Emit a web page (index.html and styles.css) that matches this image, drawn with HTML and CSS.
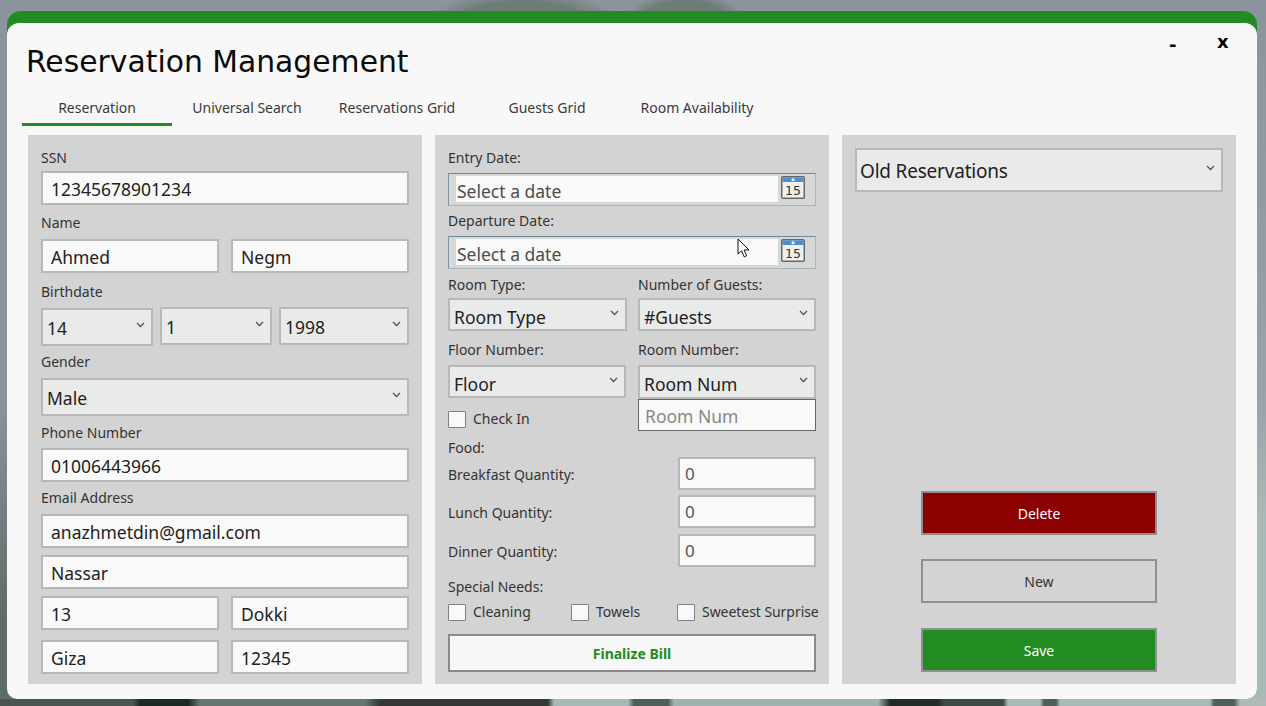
FILE: index.html
```html
<!DOCTYPE html>
<html lang="en">
    <head>
        <meta charset="UTF-8" />
        <meta name="viewport" content="width=device-width, initial-scale=1.0" />
        <title>Reservation Management</title>
        <link rel="stylesheet" href="styles.css">
    </head>
    <body>
        <svg width="0" height="0" class="defs">
            <symbol id="chevron" viewBox="0 0 9 6">
                <path d="M1 1l3.5 3.5L8 1" fill="none" stroke="#555" stroke-width="1.3" />
            </symbol>
        </svg>
        <div class="window">
            <div class="title-row">
                <h1>Reservation Management</h1>
                <div class="win-min">-</div>
                <div class="win-close">x</div>
            </div>
            <div class="tabs">
                <div class="tab active">Reservation</div>
                <div class="tab">Universal Search</div>
                <div class="tab">Reservations Grid</div>
                <div class="tab">Guests Grid</div>
                <div class="tab">Room Availability</div>
            </div>
            <div class="panels">
                <!-- guest details -->
                <div class="panel">
                    <div class="label">SSN</div>
                    <div class="input mt3">12345678901234</div>
                    <div class="label mt8">Name</div>
                    <div class="row two mt6">
                        <div class="input">Ahmed</div>
                        <div class="input">Negm</div>
                    </div>
                    <div class="label mt9">Birthdate</div>
                    <div class="row birth mt5">
                        <div class="select tall nudge">14<svg class="chev"><use href="#chevron" /></svg></div>
                        <div class="select tall">1<svg class="chev"><use href="#chevron" /></svg></div>
                        <div class="select tall">1998<svg class="chev"><use href="#chevron" /></svg></div>
                    </div>
                    <div class="label mt7">Gender</div>
                    <div class="select tall mt6">Male<svg class="chev"><use href="#chevron" /></svg></div>
                    <div class="label mt7">Phone Number</div>
                    <div class="input mt5">01006443966</div>
                    <div class="label mt6">Email Address</div>
                    <div class="input mt6">anazhmetdin@gmail.com</div>
                    <div class="input mt7">Nassar</div>
                    <div class="row two mt7">
                        <div class="input">13</div>
                        <div class="input">Dokki</div>
                    </div>
                    <div class="row two mt10">
                        <div class="input">Giza</div>
                        <div class="input">12345</div>
                    </div>
                </div>

                <!-- booking details -->
                <div class="panel">
                    <div class="label">Entry Date:</div>
                    <div class="date mt5">
                        <div class="date-text">Select a date</div>
                        <svg class="cal" viewBox="0 0 24 23">
                            <rect x="0.75" y="0.75" width="22.5" height="21.5" rx="1" fill="#f0f0f0" stroke="#666" stroke-width="1.5" />
                            <rect x="1.5" y="1.5" width="21" height="4.5" fill="#4a8fd0" />
                            <circle cx="12" cy="3.7" r="1.5" fill="#fff" />
                            <text x="12" y="18.5" text-anchor="middle" class="cal-num">15</text>
                        </svg>
                    </div>
                    <div class="label mt5">Departure Date:</div>
                    <div class="date mt5">
                        <div class="date-text">Select a date</div>
                        <svg class="cal" viewBox="0 0 24 23">
                            <rect x="0.75" y="0.75" width="22.5" height="21.5" rx="1" fill="#f0f0f0" stroke="#666" stroke-width="1.5" />
                            <rect x="1.5" y="1.5" width="21" height="4.5" fill="#4a8fd0" />
                            <circle cx="12" cy="3.7" r="1.5" fill="#fff" />
                            <text x="12" y="18.5" text-anchor="middle" class="cal-num">15</text>
                        </svg>
                    </div>
                    <svg class="cursor" width="14" height="21" viewBox="0 0 14 21">
                        <path d="M1 1v15l3.6-3.2 2.6 6 2.4-1-2.6-5.8H12z" fill="#fff" stroke="#111" stroke-width="1" />
                    </svg>
                    <div class="row two-b mt6">
                        <div class="label">Room Type:</div>
                        <div class="label">Number of Guests:</div>
                    </div>
                    <div class="row two-b mt3">
                        <div class="select">Room Type<svg class="chev"><use href="#chevron" /></svg></div>
                        <div class="select">#Guests<svg class="chev"><use href="#chevron" /></svg></div>
                    </div>
                    <div class="row two-b mt8 floor-labels">
                        <div class="label">Floor Number:</div>
                        <div class="label">Room Number:</div>
                    </div>
                    <div class="row two-b mt5">
                        <div class="select floor">Floor<svg class="chev"><use href="#chevron" /></svg></div>
                        <div class="select room-num">Room Num<svg class="chev"><use href="#chevron" /></svg></div>
                    </div>
                    <div class="row two-b">
                        <label class="check check-in"><span class="box"></span>Check In</label>
                        <div class="room-input">Room Num</div>
                    </div>
                    <div class="label food">Food:</div>
                    <div class="qty first">
                        <div class="label">Breakfast Quantity:</div>
                        <div class="input small">0</div>
                    </div>
                    <div class="qty mt5">
                        <div class="label">Lunch Quantity:</div>
                        <div class="input small">0</div>
                    </div>
                    <div class="qty mt6">
                        <div class="label">Dinner Quantity:</div>
                        <div class="input small">0</div>
                    </div>
                    <div class="label mt10">Special Needs:</div>
                    <div class="needs mt5">
                        <label class="check"><span class="box"></span>Cleaning</label>
                        <label class="check towels"><span class="box"></span>Towels</label>
                        <label class="check sweet"><span class="box"></span>Sweetest Surprise</label>
                    </div>
                    <button class="finalize">Finalize Bill</button>
                </div>

                <!-- old reservations and actions -->
                <div class="panel side">
                    <div class="select big">Old Reservations<svg class="chev"><use href="#chevron" /></svg></div>
                    <div class="actions">
                        <button class="btn delete">Delete</button>
                        <button class="btn new">New</button>
                        <button class="btn save">Save</button>
                    </div>
                </div>
            </div>
        </div>
    </body>
</html>
```

FILE: styles.css
```css
* {
    box-sizing: border-box;
}
html,
body {
    height: 100%;
}
body {
    margin: 0;
    padding: 11px 9px 7px 7px;
    overflow: hidden;
    font-family: "Noto Sans", Arial, sans-serif;
    color: #333;
    background-color: #8b939c;
    /* the desktop photo behind the window: only its edges show */
    background-image:
        linear-gradient(90deg, #4a5550 0, #4a5550 133px, #1c2a26 140px, #1c2a26 188px, #65776f 200px, #65776f 365px, #333a36 380px, #333a36 548px, #a6b8b8 554px, #a6b8b8 628px, #4d5f58 634px, #4d5f58 668px, #a0b2b0 674px, #a0b2b0 878px, #222b28 890px, #222b28 938px, #3c4a45 944px, #3c4a45 1003px, #a8bab8 1008px, #a8bab8 1040px, #4d5f58 1044px, #4d5f58 1056px, #a8bab8 1060px, #a8bab8 1210px, #4d5f58 1214px, #4d5f58 1234px, #b0b8b8 1240px),
        radial-gradient(ellipse 100px 40px at 523px 30px, #6d7c77 0, #6d7c77 70%, rgba(139, 147, 156, 0) 100%),
        radial-gradient(ellipse 60px 30px at 685px 22px, #6d7c77 0, #6d7c77 70%, rgba(139, 147, 156, 0) 100%),
        linear-gradient(180deg, #8b939c 0, #8b939c 400px, #5d6c67 620px, #5d6c67 706px),
        linear-gradient(180deg, #8b939c 0, #9aa3a8 400px, #a8bab8 520px, #a8bab8 706px);
    background-size: 100% 7px, 100% 100%, 100% 100%, 50% 100%, 50% 100%;
    background-position: 0 100%, 0 0, 0 0, 0 0, 100% 0;
    background-repeat: no-repeat;
}
.defs {
    position: absolute;
}
.window {
    position: relative;
    height: 100%;
    padding-top: 12px;
    background-color: #228b22;
    border-radius: 14px 14px 10px 10px;
    overflow: hidden;
}
.title-row {
    position: relative;
    height: 67px;
    padding: 21px 0 0 19px;
    background-color: #f8f8f8;
    border-radius: 12px 12px 0 0;
}
h1 {
    margin: 0;
    font-family: "DejaVu Sans", sans-serif;
    font-size: 29.8px;
    line-height: 36px;
    font-weight: normal;
    color: #0a0a0a;
}
.win-min,
.win-close {
    position: absolute;
    font-family: "DejaVu Sans", sans-serif;
    font-size: 18px;
    font-weight: bold;
    line-height: 20px;
    color: #000;
}
.win-min {
    top: 12px;
    left: 1162px;
}
.win-close {
    top: 9px;
    left: 1210px;
}
.tabs {
    display: flex;
    height: 45px;
    padding: 0 0 0 15px;
    background-color: #f8f8f8;
}
.tab {
    width: 150px;
    height: 36px;
    font-size: 14px;
    line-height: 36px;
    text-align: center;
    color: #3a3a3a;
}
.tab.active {
    border-bottom: 3px solid #228b22;
}
.panels {
    display: grid;
    grid-template-columns: repeat(3, 394px);
    column-gap: 13px;
    height: 564px;
    padding: 0 0 15px 21px;
    background-color: #f8f8f8;
}
.panel {
    position: relative;
    padding: 13px 13px 0;
    background-color: #d3d3d3;
}
.label {
    height: 20px;
    font-size: 14px;
    line-height: 20px;
    color: #333;
}
.input {
    height: 34px;
    padding-left: 8px;
    font-size: 17.5px;
    line-height: 32px;
    color: #222;
    background-color: #f9f9f9;
    border: 2px solid #b8b8b8;
}
.input.small {
    width: 138px;
    height: 33px;
    padding-left: 5px;
    font-size: 17px;
    line-height: 29px;
    color: #555;
}
.select {
    position: relative;
    height: 33px;
    padding-left: 4px;
    font-size: 17.5px;
    line-height: 34px;
    color: #222;
    background-color: #e9eaea;
    border: 2px solid #b8b8b8;
}
.select.tall {
    height: 38px;
    line-height: 36px;
}
.select.floor {
    margin-right: 1px;
}
.chev {
    position: absolute;
    top: 50%;
    right: 6px;
    width: 9px;
    height: 6px;
    margin-top: -5px;
}
.row {
    display: grid;
}
.row.two {
    grid-template-columns: 178px 178px;
    column-gap: 12px;
}
.row.birth {
    grid-template-columns: 112px 112px 130px;
    column-gap: 7px;
    align-items: start;
}
.row.two-b {
    grid-template-columns: 179px 178px;
    column-gap: 11px;
}
.row.floor-labels {
    margin-top: 9px;
}
.nudge {
    margin: 1px 0 -1px;
}
.date {
    display: flex;
    height: 33px;
    padding: 2px 0 3px 7px;
    border: 1px solid #a9b6bc;
    border-top-color: #6f8796;
    border-left-color: #7f93a0;
    background-color: #d6d8d8;
}
.date-text {
    width: 322px;
    padding-left: 1px;
    font-size: 17.5px;
    line-height: 31px;
    color: #4c4c4c;
    background-color: #f9f9f9;
}
.cal {
    width: 24px;
    height: 23px;
    margin-left: 3px;
}
.cal-num {
    font-family: "DejaVu Sans", sans-serif;
    font-size: 12.5px;
    fill: #333;
}
.cursor {
    position: absolute;
    top: 103px;
    left: 302px;
}
.room-num {
    height: 34px;
}
.room-input {
    height: 32px;
    padding-left: 6px;
    font-size: 17.5px;
    line-height: 33px;
    color: #888;
    background-color: #f9f9f9;
    border: 1px solid #666;
}
.check {
    display: flex;
    align-items: center;
    font-size: 14px;
    line-height: 20px;
    white-space: nowrap;
    color: #333;
}
.check-in {
    height: 20px;
    margin-top: 10px;
}
.box {
    width: 18px;
    height: 17px;
    margin-right: 7px;
    background-color: #f9f9f9;
    border: 1px solid #808080;
    border-radius: 1px;
}
.food {
    margin-top: 7px;
}
.qty {
    display: flex;
    align-items: center;
    justify-content: space-between;
}
.qty .label {
    margin-top: 2px;
}
.qty.first {
    margin-top: -1px;
}
.needs {
    position: relative;
    height: 20px;
}
.needs .check {
    position: absolute;
    top: 0;
    left: 0;
}
.needs .towels {
    left: 123px;
}
.needs .sweet {
    left: 229px;
    letter-spacing: -0.05px;
}
.finalize {
    display: block;
    width: 368px;
    height: 38px;
    margin-top: 12px;
    font-family: "Noto Sans", Arial, sans-serif;
    font-size: 14px;
    font-weight: bold;
    color: #228b22;
    background-color: #f8f8f8;
    border: 2px solid #8a8a8a;
}
.select.big {
    height: 44px;
    padding-left: 3px;
    font-size: 19px;
    letter-spacing: -0.2px;
    line-height: 43px;
}
.actions {
    display: flex;
    flex-direction: column;
    align-items: center;
    gap: 24px;
    margin-top: 299px;
}
.btn {
    width: 236px;
    height: 44px;
    font-family: "Noto Sans", Arial, sans-serif;
    font-size: 14px;
    border: 2px solid #909090;
}
.delete {
    padding-top: 2px;
    color: #fff;
    background-color: #8b0000;
}
.new {
    color: #333;
    background-color: #d3d3d3;
}
.save {
    margin-top: 1px;
    color: #fff;
    background-color: #228b22;
}
.mt3 { margin-top: 3px; }
.mt5 { margin-top: 5px; }
.mt6 { margin-top: 6px; }
.mt7 { margin-top: 7px; }
.mt8 { margin-top: 8px; }
.mt9 { margin-top: 9px; }
.mt10 { margin-top: 10px; }
```
